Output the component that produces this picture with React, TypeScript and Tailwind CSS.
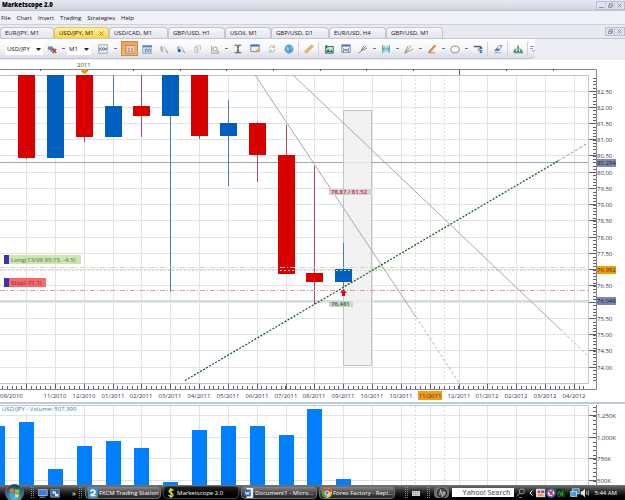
import type { ReactNode } from "react";
import clsx from "clsx";
import { Fragment } from "react";

const PRICE_TOP = 82.5;
const PRICE_TOP_Y = 31.5;
const PX_PER_UNIT = 32.48;
const MONTH_X = 26;
const MONTH_STEP = 28.84;

const priceY = (price: number) => Math.round(PRICE_TOP_Y + (PRICE_TOP - price) * PX_PER_UNIT) - 0.5;
const monthX = (i: number) => Math.round(MONTH_X + i * MONTH_STEP);

const range = (n: number) => Array.from({ length: n }, (_, i) => i);

const menus = ["File", "Chart", "Insert", "Trading", "Strategies", "Help"];

const tabs = [
    { label: "EUR/JPY, M1", width: "w-[54px]" },
    { label: "USD/JPY, M1", width: "w-[55px]", active: true },
    { label: "USD/CAD, M1", width: "w-[59px]" },
    { label: "GBP/USD, H1", width: "w-[57px]" },
    { label: "USOil, M1", width: "w-[46px]" },
    { label: "GBP/USD, D1", width: "w-[58px]" },
    { label: "EUR/USD, H4", width: "w-[57px]" },
    { label: "GBP/USD, M1", width: "w-[57px]" },
];

// top / bottom of the body, then high / low of the wick
const candles = [
    { i: 0, up: false, top: 15, bottom: 98, high: 15, low: 99 },
    { i: 1, up: true, top: 15, bottom: 98, high: 15, low: 98 },
    { i: 2, up: false, top: 15, bottom: 77, high: 15, low: 82 },
    { i: 3, up: true, top: 46, bottom: 77, high: 15, low: 77 },
    { i: 4, up: false, top: 46, bottom: 56, high: 15, low: 77 },
    { i: 5, up: true, top: 15, bottom: 56, high: 15, low: 232 },
    { i: 6, up: false, top: 15, bottom: 76, high: 15, low: 79 },
    { i: 7, up: true, top: 63, bottom: 76, high: 40, low: 126 },
    { i: 8, up: false, top: 63, bottom: 95, high: 62, low: 122 },
    { i: 9, up: false, top: 95, bottom: 214, high: 65, low: 214 },
    { i: 10, up: false, top: 213, bottom: 222, high: 106, low: 244 },
    { i: 11, up: true, top: 209, bottom: 222, high: 183, low: 227 },
];

const months = [
    "11/2010", "12/2010", "01/2011", "02/2011", "03/2011", "04/2011", "05/2011", "06/2011", "07/2011", "08/2011",
    "09/2011", "10/2011", "10/2011", "11/2011", "12/2011", "01/2012", "02/2012", "03/2012", "04/2012",
];

const volumes = [22, 18, 65, 42, 37, 44, 78, 26, 22, 22, 31, 5, 75];

const volumeScale = [
    { label: "1,250K", y: 11.5 },
    { label: "1,000K", y: 33.5 },
    { label: "750K", y: 54.5 },
    { label: "500K", y: 76.5 },
];

function Icon({ children }: { children: ReactNode }) {
    return (
        <svg viewBox="0 0 12 12" className="h-[10px] w-[10px]" fill="none" strokeWidth="1" aria-hidden="true">
            {children}
        </svg>
    );
}

const SmallCandles = ({ dot }: { dot: string }) => (
    <Icon>
        <path d="M3 2v7M1.500 4h3v3h-3zM6 3l4 6" stroke="#a9abb2" />
        <circle cx="4" cy="8" r="2" fill={dot} />
        <path d="M8 8l3 3" stroke="#777" />
    </Icon>
);

interface Tool {
    name: string;
    icon?: ReactNode;
    active?: boolean;
    caret?: boolean;
    sep?: boolean;
}

const tools: Tool[] = [
    {
        name: "Table view",
        active: true,
        icon: <Icon><rect x="1" y="2" width="11" height="9" fill="#f5dfcb" stroke="#9a7a6c" /><path d="M3 5h3M3 7h3M3 9h3M7 5h3M7 7h3M7 9h3" stroke="#a06a58" /></Icon>,
    },
    {
        name: "Columns",
        icon: <Icon><rect x="1" y="2" width="11" height="9" fill="#dbe8f6" stroke="#8293ad" /><path d="M1 3h11" stroke="#5d7fb5" strokeWidth="2" /><path d="M4 10V6h2v4M8 10V6h2v4" stroke="#6b7a92" /></Icon>,
    },
    { name: "Zoom out", icon: <SmallCandles dot="#c3c4ca" /> },
    { name: "Zoom in", icon: <SmallCandles dot="#2d63b8" /> },
    { name: "Zoom reset", icon: <Icon><path d="M2 4h4v6H2zM6 2h3v5M4 1v3" stroke="#b7b8be" /><circle cx="5" cy="7" r="1.500" fill="#c9cacf" /></Icon> },
    { name: "Zoom area", caret: true, icon: <Icon><path d="M2 2v9h9" stroke="#8d9096" /><circle cx="6" cy="6" r="2.500" stroke="#8d9096" /><path d="M8 8l3 2" stroke="#55a07a" /></Icon> },
    { name: "Fit height", icon: <Icon><path d="M2 1.500h8M2 10.500h8" stroke="#333" /><path d="M4 3h4L6 6zM4 9h4L6 6z" fill="#3f9a45" /><path d="M6 2v8" stroke="#26642c" /></Icon> },
    { name: "Edit note", icon: <Icon><rect x="1" y="1" width="10" height="8" fill="#e9f0fa" stroke="#6782ad" /><path d="M1 2h10" stroke="#4a6ca6" strokeWidth="2" /><path d="M5 10l5-5 1.500 1.500-4 4z" fill="#efac25" /></Icon> },
    { name: "Refresh", icon: <Icon><path d="M3 5a3 3 0 0 1 5-2M9 6a3 3 0 0 1-5 3M9 1v3H6M3 10.500V8h3" stroke="#a9abb0" /></Icon> },
    { name: "Web", sep: true, icon: <Icon><circle cx="6" cy="6" r="5" fill="#4a9bd6" stroke="#78b5de" /><path d="M3 3l2 1 1 2-1 3-2-3zM8 2l2 3-2 1zM8 8l1-1" fill="#a5d5c8" /></Icon> },
    { name: "Ruler", sep: true, icon: <Icon><path d="M1 9l8-8 2 2-8 8z" fill="#f3d27c" stroke="#c39343" /><path d="M4 7l1 1M6 5l1 1M8 3l1 1" stroke="#936a24" /></Icon> },
    { name: "Add picture", icon: <Icon><rect x="2" y="3" width="9" height="8" fill="#bfe0ef" stroke="#345d3a" /><path d="M2 10l3-4 2 3 2-2 2 3z" fill="#207a36" /><path d="M3 1v4M1 3h4" stroke="#238a37" strokeWidth="1.500" /></Icon> },
    { name: "Add window", icon: <Icon><rect x="1" y="1" width="10" height="9" fill="#e9f0f8" stroke="#7688a8" /><path d="M1 2h10" stroke="#4d73ae" strokeWidth="2" /><path d="M2 5l4 3 4-3M3 10V7h6v3" stroke="#687894" /></Icon> },
    { name: "Fan lines", caret: true, icon: <Icon><path d="M1 11l9-9M4 8l3-6M4 8l7-3" stroke="#777" /></Icon> },
    { name: "Channel", caret: true, icon: <Icon><rect x="2" y="2" width="8" height="8" fill="#b9dfe4" /><path d="M2 1v10M10 1v10M2 6h8M4 4L2 6l2 2M8 4l2 2-2 2" stroke="#4b97a4" /></Icon> },
    { name: "Pitchfork", caret: true, icon: <Icon><path d="M1 11l4-9M1 11l8-9M1 11l10-5" stroke="#888" /></Icon> },
    { name: "Line", caret: true, icon: <Icon><path d="M2 9l7-8 1.500 1.500L4 10z" fill="#df8a3d" stroke="#b8682a" strokeWidth=".5" /><path d="M1 10.500h9" stroke="#bd7440" /></Icon> },
    { name: "Ellipse", caret: true, icon: <Icon><ellipse cx="6" cy="6.500" rx="5" ry="4" fill="#fafafa" stroke="#777" /></Icon> },
    { name: "Format", sep: true, icon: <Icon><path d="M1 2h8l2 2v2H8V4H1z" fill="#55606a" /><path d="M6 5h2v3H6z" fill="#7e98b5" /><path d="M8 7h3v4H8z" fill="#3688d0" /></Icon> },
    { name: "Eraser", sep: true, icon: <Icon><path d="M2 8l5-6h4L7 8z" fill="#f4f7fb" stroke="#727b8a" /><path d="M2 8h5l1-2-3-1z" fill="#4b7ab5" /><path d="M2 10.500h8" stroke="#999" /></Icon> },
    { name: "Order tree", sep: true, icon: <Icon><path d="M6 1v5M3 8V6h6v2" stroke="#5f93be" /><path d="M4.500 5h3L6 2zM0 10l2-4 2 4zM4 10l2-4 2 4zM8 10l2-4 2 4z" fill="#3c9345" /><path d="M1 10.500h11" stroke="#2c6d35" /></Icon> },
];

const Caret = () => <span className="h-px w-[3px] bg-[#777]" />;
const Separator = () => <span className="mx-px h-[14px] w-px bg-[#d0d1dc]" />;

function WindowButtons({ names }: { names: string[] }) {
    return (
        <div className="ml-auto flex h-[9px] border border-[#b9bdd0] bg-[#dfe1ec]">
            {names.map((name) => (
                <button key={name} aria-label={name} className="flex w-[9px] items-center justify-center border-r border-[#c5c8d8] last:border-r-0">
                    <svg viewBox="0 0 7 7" className="h-[7px] w-[7px]" fill="none" stroke="#8e93ad">
                        {name === "Minimize" && <path d="M1 5.500h5" />}
                        {name === "Restore" && <path d="M2.500 3V1.500h3v3H4M1.500 3.500h3v2h-3z" />}
                        {name === "Close" && <path d="M1.500 1.500l4 4M5.500 1.500l-4 4" />}
                    </svg>
                </button>
            ))}
        </div>
    );
}

function Picker({ label, value, className }: { label: string; value: string; className: string }) {
    return (
        <div className={clsx("relative h-[13px] shrink-0 bg-white", className)}>
            <select aria-label={label} defaultValue={value} className="h-[13px] w-full appearance-none pl-[2px] leading-[12px] outline-none">
                <option>{value}</option>
            </select>
            <svg viewBox="0 0 5 3" className="pointer-events-none absolute top-[6px] right-[2px] h-[3px] w-[5px]">
                <path d="M0 0h5L2.500 3z" fill="#222" />
            </svg>
        </div>
    );
}

function Toolbar() {
    return (
        <div className="flex h-[21px] bg-[#ededf5]">
            <div className="flex h-5 items-center rounded-br-sm border-b border-[#c4c6d4] bg-linear-to-b from-white via-[#f6f6fa] to-[#dadbe6] pl-[5px]">
                <Picker label="Instrument" value="USD/JPY" className="w-[38px]" />
                <button aria-label="Bid / ask" className="flex w-[17px] justify-center">
                    <Icon>
                        <path d="M1 3h6v4H1zM4 5h5v4H4z" fill="#75849e" />
                        <path d="M7 6l4 5M11 6l-4 5" stroke="#cf2a2a" strokeWidth="1.500" />
                    </Icon>
                </button>
                <span className="flex w-[7px] justify-center"><Caret /></span>
                <Picker label="Period" value="M1" className="w-[24px]" />
                <button aria-label="Chart style" className="ml-[3px] flex w-[17px] justify-center">
                    <Icon>
                        <rect x="1" y="1" width="10" height="10" fill="#f4f8fc" stroke="#7b93b4" />
                        <path d="M1 8l3-4 3 4 2-3 2 2" stroke="#3b8a55" />
                        <path d="M1 5l3 3 3-4 2 3 2-2" stroke="#5a6a8a" />
                    </Icon>
                </button>
                <span className="flex w-[8px] justify-center"><Caret /></span>
                <span className="w-[2px]" />
                {tools.map((tool) => (
                    <Fragment key={tool.name}>
                        <button
                            aria-label={tool.name}
                            className={clsx(
                                "flex h-[15px] w-[17px] items-center justify-center",
                                tool.active && "border border-[#cf8a45] bg-linear-to-b from-[#f7a04e] to-[#fbb565]",
                            )}
                        >
                            {tool.icon}
                        </button>
                        {tool.caret && <span className="flex w-[6px] justify-center"><Caret /></span>}
                        {tool.sep && <Separator />}
                    </Fragment>
                ))}
                <button aria-label="More tools" className="flex w-[6px] justify-center">
                    <svg viewBox="0 0 5 6" className="h-[6px] w-[5px]" fill="none" stroke="#9a9cab">
                        <path d="M0 .5h4M0 2.500h3M2 4l1.500 1.500L5 4" />
                    </svg>
                </button>
            </div>
        </div>
    );
}

function PriceChart() {
    return (
        <svg viewBox="0 0 625 342" className="block w-full bg-white text-[6px]" role="img" aria-label="USD/JPY price chart">
            {/* grid */}
            <g stroke="#e3e3e5">
                {range(18).map((i) => (
                    <path key={i} d={`M0 ${priceY(82.5 - i / 2)}H588`} />
                ))}
                {range(20).map((i) => (
                    <path key={i} d={`M${monthX(i)}.5 15V323`} />
                ))}
                <path d="M415.500 15V323M444.500 15V323" stroke="#dcdcde" strokeDasharray="2 2" />
            </g>
            <path d="M0 15.500H588.500V323.500H0" fill="none" stroke="#c3c4c7" />
            <path d="M0 9.500H596.500V329.500H0" fill="none" stroke="#85868a" />

            {/* ruler ticks */}
            <g stroke="#606166">
                {range(12).map((i) => (
                    <path key={i} d={`M${Math.round(40 + i * 46.6)}.5 9v${i === 9 ? 6 : 2}`} />
                ))}
                {range(122).map((i) => (
                    <path key={i} d={`M${Math.round(2 + i * 4.805)}.5 326v3`} />
                ))}
                {range(20).map((i) => (
                    <path key={i} d={`M${monthX(i)}.5 324v5`} />
                ))}
                {range(94).map((i) => (
                    <path key={i} d={`M593 ${Math.round(18 + i * 3.248)}.5h3`} />
                ))}
                {range(18).map((i) => (
                    <path key={i} d={`M589 ${priceY(82.5 - i / 2)}h7`} />
                ))}
            </g>
            <text x="77" y="7" fill="#444">2011</text>
            <path d="M81.500 9h6v3l-3 2-3-2z" fill="#e2961c" />

            {/* horizontal levels */}
            <path d="M0 102.500H588" stroke="#a3a5b4" />
            <path d="M0 241H588" stroke="#dadbe2" strokeWidth="2" />

            <rect x="343.500" y="50.500" width="28" height="255" fill="#efeff0" fillOpacity=".8" stroke="#c3c4c6" />

            {candles.map(({ i, up, top, bottom, high, low }) => (
                <g key={i} fill={up ? "#0060c0" : "#da0000"}>
                    <path d={`M${monthX(i)}.5 ${high}V${low}`} stroke={up ? "#4f7f9f" : "#a85058"} />
                    <rect x={monthX(i) - 8} y={top} width="17" height={bottom - top} />
                </g>
            ))}

            <g fill="none">
                <path d="M0 207.500H588" stroke="#d6d2c0" strokeDasharray="5 2 1 2" />
                <path d="M0 210.500H588" stroke="#d3d6c8" strokeDasharray="2 2" />
                <path d="M0 230.500H588" stroke="#d99aa0" strokeDasharray="5 2 1 2" />
                <path d="M255 15L416 257M293 15L560 269" stroke="#a6a7aa" />
                <path d="M416 257l42.500 65M560 269l28 27" stroke="#b4b5b8" strokeDasharray="3 2" />
                <path d="M185 320.500L558 101" stroke="#1c6324" strokeWidth="1.300" strokeDasharray="2 1.500" />
                <path d="M558 101l30-18" stroke="#7c9a80" strokeDasharray="3 2" />
            </g>

            <rect x="329" y="129" width="43" height="6" fill="#d3d3d4" />
            <text x="331" y="134" fill="#c8202c" fontWeight="600">78.87 / 81.52</text>
            <rect x="329" y="241" width="24" height="6" fill="#ccd6cb" />
            <text x="331" y="246" fill="#226d2b" fontWeight="600">76.481</text>
            <path d="M343.500 229l3.500 4h-2v3h-3v-3h-2z" fill="#d41118" />

            {/* open position and its stop */}
            <rect x="9" y="195" width="72" height="9" fill="#cfe6b4" />
            <rect x="4" y="195" width="5" height="9" fill="#3a34b4" />
            <text x="11" y="202" fill="#6d8b55" fontWeight="600">Long(13/09 05:15, -4.5)</text>
            <rect x="9" y="218" width="37" height="9" fill="#f76a6c" />
            <rect x="4" y="218" width="5" height="9" fill="#3a34b4" />
            <text x="11" y="225" fill="#b52f35" fontWeight="600">Stop(-71.1)</text>

            {/* price labels */}
            <g fill="#33354f">
                {range(18).map((i) => {
                    const price = 82.5 - i / 2;
                    if (price === 77 || price === 76) return null;
                    return (
                        <text key={i} x="597" y={priceY(price) + 2.5}>{price.toFixed(2)}</text>
                    );
                })}
            </g>
            <rect x="597" y="99" width="19" height="8" fill="#8088b2" />
            <text x="597" y="105" fill="#14182e">80.294</text>
            <rect x="597" y="206" width="19" height="8" fill="#f39c12" />
            <text x="597" y="212" fill="#3b2a08">76.992</text>
            <rect x="597" y="237" width="19" height="8" fill="#8088b2" />
            <text x="597" y="243" fill="#14182e">76.048</text>

            {/* dates */}
            <rect x="418" y="331" width="24" height="9" fill="#f39c12" />
            <g fill="#33354f">
                <text x="0" y="338">09/2010</text>
                {months.map((month, i) => (
                    <text key={i} x={monthX(i + 1)} y="338" textAnchor="middle">{month}</text>
                ))}
            </g>
        </svg>
    );
}

function VolumeChart() {
    return (
        <svg viewBox="0 0 625 81" className="block w-full bg-white text-[6px]" role="img" aria-label="USD/JPY volume chart">
            <g stroke="#e3e3e5">
                {volumeScale.map(({ y }) => (
                    <path key={y} d={`M0 ${y}H588`} />
                ))}
                {range(20).map((i) => (
                    <path key={i} d={`M${monthX(i)}.5 2V81`} />
                ))}
                <path d="M415.500 2V81M444.500 2V81" stroke="#dcdcde" strokeDasharray="2 2" />
            </g>
            <path d="M0 1.500H588.500V81" fill="none" stroke="#c3c4c7" />
            <path d="M596.500 1V81" stroke="#85868a" />
            <g stroke="#606166">
                {range(18).map((i) => (
                    <path key={i} d={`M593 ${Math.round(3 + i * 4.33)}.5h3`} />
                ))}
                {volumeScale.map(({ y }) => (
                    <path key={y} d={`M589 ${y}h7`} />
                ))}
            </g>
            {volumes.map((top, i) => (
                <rect key={i} x={monthX(i - 1) - 7} y={top} width="15" height={81 - top} fill="#007fff" />
            ))}
            <rect x="0" y="2" width="81" height="7" fill="#fff" />
            <text x="2" y="7" fill="#2f7ac0">USD/JPY - Volume: 507,399</text>
            <g fill="#33354f">
                {volumeScale.map(({ label, y }) => (
                    <text key={label} x="597" y={y + 2.5}>{label}</text>
                ))}
            </g>
        </svg>
    );
}

const Grip = () => (
    <svg viewBox="0 0 3 12" className="h-3 w-[3px] shrink-0" aria-hidden="true">
        <path d="M.5 0v12M2.500 0v12" stroke="#8b8b8b" strokeDasharray="1 1" />
    </svg>
);

const apps = [
    {
        label: "FXCM Trading Station",
        icon: <Icon><rect width="12" height="12" rx="2" fill="#3a93c8" /><path d="M3 4c3-3 7 0 5 2s-5 1-4 3h5" stroke="#fff" strokeWidth="2" /></Icon>,
    },
    {
        label: "Marketscope 2.0",
        active: true,
        icon: <Icon><path d="M9 3C7 1 3 2 4 4.500S9 6 8.500 8.500 4 10.500 3 8.500M6 0v12" stroke="#e9e233" strokeWidth="1.500" /></Icon>,
    },
    {
        label: "Document1 - Micro...",
        icon: <Icon><rect x="3" width="8" height="12" fill="#e9f0fa" /><rect y="2" width="8" height="8" fill="#2e5fae" /><path d="M1.500 4l1.500 4 1-3 1 3 1.500-4" stroke="#fff" /></Icon>,
    },
    {
        label: "Forex Factory - Repl...",
        icon: <Icon><circle cx="6" cy="6" r="6" fill="#f3c52c" /><path d="M6 6L1 3a6 6 0 0 1 10.500 1z" fill="#da3b2c" /><path d="M6 6L1 3a6 6 0 0 0 4 9z" fill="#37a349" /><circle cx="6" cy="6" r="2.500" fill="#3b7de0" stroke="#fff" /></Icon>,
    },
];

function Taskbar() {
    return (
        <footer className="flex h-[15px] items-center bg-linear-to-b from-[#777] via-[#2d2d2d] via-40% to-black text-white">
            <button aria-label="Start" className="-mt-px ml-[5px] w-[19px] shrink-0">
                <svg viewBox="0 0 19 16" className="h-4 w-[19px]">
                    <defs>
                        <radialGradient id="orb" cx=".5" cy=".8" r=".7">
                            <stop offset="0" stopColor="#51bde0" />
                            <stop offset="1" stopColor="#24475e" />
                        </radialGradient>
                    </defs>
                    <circle cx="9.500" cy="9" r="9" fill="url(#orb)" stroke="#8ba4af" strokeWidth=".5" />
                    <path d="M5 5q2-1.500 4 0v3.500q-2-1.500-4.500 0z" fill="#ee6a35" />
                    <path d="M10 5q2 1.500 4.500 0L14 8.500q-2 1.500-4 0z" fill="#8cc63e" />
                    <path d="M4.500 9.500q2-1.500 4.500 0V13q-2-1.500-4 0z" fill="#4b9fe4" />
                    <path d="M10 9.500q2 1.500 4 0l-.5 3.500q-2 1.500-3.500 0z" fill="#fbd43c" />
                </svg>
            </button>
            <span className="ml-[7px] flex"><Grip /></span>
            <button aria-label="Show desktop" className="ml-[4px]">
                <Icon><rect y="2" width="11" height="7" fill="#3f78cc" stroke="#a9c3e6" /><path d="M2 11h7" stroke="#9db" /></Icon>
            </button>
            <button aria-label="Switch windows" className="ml-[2px]">
                <Icon><rect x="1" y="2" width="10" height="9" fill="#2b639d" stroke="#82a8c9" /><path d="M3 4h4v3H3zM6 7h4v3H6z" fill="#d8e8f4" /></Icon>
            </button>
            <button className="ml-[10px] w-[8px] text-[8px] leading-[10px]" aria-label="More">»</button>
            <span className="ml-[1px] flex"><Grip /></span>
            <div className="ml-[3px] flex gap-[2px]">
                {apps.map((app) => (
                    <button
                        key={app.label}
                        className={clsx(
                            "flex h-[13px] w-[76px] items-center gap-px rounded-sm border pl-[2px] whitespace-nowrap",
                            app.active
                                ? "border-[#3f3f3f] bg-linear-to-b from-[#222] to-black"
                                : "border-[#6d6d6d] bg-linear-to-b from-[#848484] via-[#4c4c4c] to-[#252525]",
                        )}
                    >
                        <span className="shrink-0">{app.icon}</span>
                        <span>{app.label}</span>
                    </button>
                ))}
            </div>
            <div className="ml-auto flex items-center pr-[8px]">
                <Grip />
                <button aria-label="Keyboard" className="ml-[4px]">
                    <svg viewBox="0 0 8 6" className="h-[6px] w-[8px]">
                        <path d="M0 1h8v5H0z" fill="#cfcfcf" />
                        <path d="M1 2.500h6M1 4.500h6" stroke="#888" strokeDasharray="1 1" />
                    </svg>
                </button>
                <span className="ml-[7px] flex"><Grip /></span>
                <button aria-label="HP" className="ml-[4px] flex h-[11px] w-[15px] items-center justify-center rounded-sm bg-[#707070]">
                    <svg viewBox="0 0 10 10" className="h-[10px] w-[10px]" fill="none">
                        <circle cx="5" cy="5" r="4.500" fill="#4b4b4b" stroke="#222" />
                        <path d="M4 1L2.500 7M3.500 4h1.500L4.500 7M6.500 4L5 9.500M6.500 4h1.500L7.500 7H6" stroke="#d5d5d5" strokeWidth=".8" />
                    </svg>
                </button>
                <input
                    aria-label="Web search"
                    defaultValue="Yahoo! Search"
                    className="ml-[3px] h-[9px] w-[62px] bg-white pr-[4px] text-right text-[7px] leading-[9px] font-semibold text-[#666] outline-none"
                />
                <button aria-label="Search" className="ml-[2px]">
                    <Icon><circle cx="7" cy="4" r="3" stroke="#aaa" /><path d="M5 6l-4 4M4 11.500h3" stroke="#aaa" /></Icon>
                </button>
                <button aria-label="Show hidden icons" className="ml-[3px]">
                    <svg viewBox="0 0 4 6" className="h-[6px] w-[4px]" fill="none"><path d="M3.500.5L1 3l2.500 2.500" stroke="#fff" /></svg>
                </button>
                <div className="ml-[3px] flex">
                    <Icon><rect y="1" width="11" height="10" fill="#efd5de" /><path d="M2 3h3v3H2z" fill="#d13c62" /><path d="M6 3h4v3H6z" fill="#4b68cb" /><path d="M2 7h7v3H2z" fill="#e8a235" /></Icon>
                    <Icon><circle cx="6" cy="6" r="5" fill="#dfe4f7" stroke="#3d54b8" strokeWidth="2" /><path d="M3 3l6 6M8 3L5 8" stroke="#d22937" strokeWidth="2" /></Icon>
                    <Icon><rect x="1" y="1" width="10" height="10" fill="#0c3312" /><path d="M2 8l2-4 2 3 3-5M4 10l5-4M8 6v4" stroke="#26bf3b" /></Icon>
                </div>
                <div className="ml-[4px] flex">
                    <Icon><rect x="3" y="1" width="8" height="6" fill="#2b79c4" stroke="#c5dcec" /><rect x="1" y="4" width="7" height="6" fill="#3e9ad2" stroke="#d7e6f1" /></Icon>
                    <Icon><path d="M1 4h2l3-3v10L3 8H1z" fill="#e4e4e4" /><path d="M8 4v4M10 3v6" stroke="#ccc" /></Icon>
                </div>
                <span className="ml-[4px] whitespace-nowrap">5:44 AM</span>
            </div>
        </footer>
    );
}

export default function App() {
    return (
        <div className="flex min-h-screen flex-col overflow-hidden bg-white font-['Open_Sans','Noto_Sans',sans-serif] text-[6px] leading-[8px] text-[#111]">
            <header className="flex h-[11px] items-center border-b border-[#c3c5d4] bg-linear-to-b from-[#e8e9f2] to-[#d0d3e1] pl-[2px]">
                <h1 className="font-extrabold text-black">Marketscope 2.0</h1>
                <WindowButtons names={["Minimize", "Restore", "Close"]} />
            </header>

            <nav className="flex h-[14px] items-center gap-[6px] border-b border-[#cfd0de] bg-[#f0f0f7] pl-[1px]">
                {menus.map((menu) => (
                    <button key={menu}>{menu}</button>
                ))}
            </nav>

            <div className="flex h-[14px] items-end border-b border-[#c4c6d4] bg-[#e8e9f1]">
                <div role="tablist" className="flex">
                    {tabs.map((tab) => (
                        <button
                            key={tab.label}
                            role="tab"
                            aria-selected={!!tab.active}
                            className={clsx(
                                "flex h-[11px] items-center justify-between rounded-t-sm border border-b-0 px-[4px] whitespace-nowrap",
                                tab.width,
                                tab.active
                                    ? "border-[#e3c566] bg-linear-to-b from-[#fff0a0] to-[#fbd545]"
                                    : "border-[#c3c5d3] bg-linear-to-b from-[#f7f7fb] to-[#e3e4ee]",
                            )}
                        >
                            {tab.label}
                            {tab.active && (
                                <svg viewBox="0 0 5 5" className="h-[5px] w-[5px]"><path d="M.5.5l4 4M4.500.5l-4 4" stroke="#b98a1e" /></svg>
                            )}
                        </button>
                    ))}
                </div>
                <div className="mb-[2px] ml-auto flex">
                    <WindowButtons names={["Restore", "Close"]} />
                </div>
            </div>

            <Toolbar />
            <main>
                <PriceChart />
                <div className="h-[2px] bg-[#bccadc]" />
                <VolumeChart />
            </main>
            <Taskbar />
        </div>
    );
}
